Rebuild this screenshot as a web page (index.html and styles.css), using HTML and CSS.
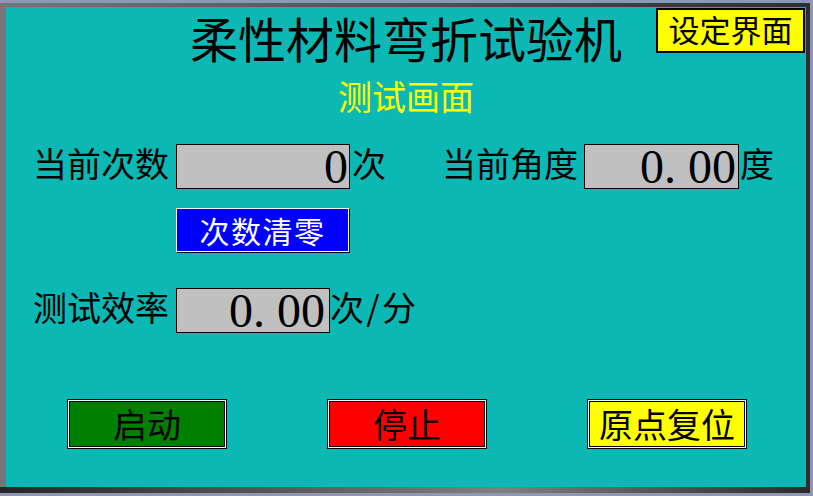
FILE: index.html
```html
<!DOCTYPE html>
<html lang="zh-CN">
<head>
<meta charset="utf-8">
<title>柔性材料弯折试验机</title>
<link rel="stylesheet" href="styles.css">
</head>
<body>
<div class="screen">
  <div class="frame">
    <main class="panel">
      <header class="header">
        <div class="spacer"></div>
        <h1 class="title">柔性材料弯折试验机</h1>
        <button class="btn-setup">设定界面</button>
      </header>
      <h2 class="subtitle">测试画面</h2>

      <div class="row row-1">
        <span class="label">当前次数</span>
        <div class="value value-count">0</div>
        <span class="unit unit-count">次</span>
        <span class="label label-angle">当前角度</span>
        <div class="value value-angle">0<span class="dot">.</span>00</div>
        <span class="unit unit-angle">度</span>
      </div>

      <div class="row row-2">
        <button class="btn-reset">次数清零</button>
      </div>

      <div class="row row-3">
        <span class="label">测试效率</span>
        <div class="value value-rate">0<span class="dot">.</span>00</div>
        <span class="unit unit-rate">次<span class="slash">/</span>分</span>
      </div>

      <div class="actions">
        <button class="btn-action btn-start">启动</button>
        <button class="btn-action btn-stop">停止</button>
        <button class="btn-action btn-home">原点复位</button>
      </div>
    </main>
  </div>
</div>
</body>
</html>
```

FILE: styles.css
```css
* {
  box-sizing: border-box;
}

html, body {
  margin: 0;
  padding: 0;
  background: #9096b8;
}

body {
  font-family: "Noto Sans CJK SC", "Noto Sans", sans-serif;
  color: #000;
}

.screen {
  width: 813px;
  height: 496px;
  padding: 3px 3px 3px 0;
  background: #9096b8;
}

.frame {
  width: 810px;
  height: 490px;
  padding: 4px 4px 6px 6px;
  background:
    linear-gradient(to right, #262626, #808080 62%, #2a2a2a) left bottom / 100% 6px no-repeat,
    linear-gradient(to right, #767676, #585858 40%, #2e2e2e);
}

.panel {
  width: 800px;
  height: 480px;
  background: #0bb8b4;
  display: flex;
  flex-direction: column;
}

/* header */
.header {
  display: grid;
  grid-template-columns: 1fr auto 1fr;
  height: 54px;
}

.title {
  margin: 6px 0 0;
  font-size: 48px;
  line-height: 48px;
  font-weight: normal;
  white-space: nowrap;
}

.btn-setup {
  justify-self: end;
  align-self: start;
  margin: 1px 1px 0 0;
  width: 149px;
  height: 45px;
  padding: 0 0 4px;
  border: 2px solid #000;
  background: #ffff00;
  font-family: inherit;
  font-size: 31px;
  line-height: 37px;
  color: #000;
  text-align: center;
}

.subtitle {
  margin: 18px 0 0;
  font-size: 34px;
  line-height: 34px;
  font-weight: normal;
  color: #ffff00;
  text-align: center;
}

/* rows */
.row {
  display: flex;
  align-items: flex-start;
  padding-left: 27px;
}

.row-1 {
  margin-top: 31px;
}

.row-2 {
  margin-top: 19px;
  padding-left: 170px;
}

.row-3 {
  margin-top: 36px;
}

.label,
.unit {
  margin-top: 2px;
  font-size: 34px;
  line-height: 34px;
  white-space: nowrap;
}

.label-angle {
  margin-left: 56px;
}

.value {
  height: 45px;
  margin-left: 7px;
  padding: 1px 1px 0 0;
  border: 1px solid #000;
  background: #c0c0c0;
  font-family: "Liberation Serif", "Times New Roman", serif;
  font-size: 48px;
  line-height: 42px;
  text-align: right;
  white-space: nowrap;
}

.value-count {
  width: 174px;
}

.value-angle {
  width: 155px;
  margin-left: 6px;
  padding-right: 2px;
}

.value-rate {
  width: 154px;
  padding-right: 4px;
}

.dot {
  display: inline-block;
  width: 24px;
  text-align: left;
}

.unit-count {
  margin-left: 2px;
}

.unit-angle {
  margin-left: 1px;
}

.unit-rate {
  margin-left: 0;
}

.slash {
  display: inline-block;
  width: 18px;
  text-align: center;
}

/* buttons */
.btn-reset {
  width: 173px;
  height: 44px;
  padding: 0;
  border: 1px solid #fff;
  box-shadow: 1px 1px 0 #000;
  background: #0000ff;
  color: #fff;
  font-family: inherit;
  font-size: 30px;
  line-height: 42px;
  letter-spacing: 1.5px;
  text-align: center;
}

.actions {
  display: flex;
  gap: 100px;
  margin-top: 66px;
  padding-left: 61px;
}

.btn-action {
  width: 160px;
  height: 50px;
  padding: 0;
  border: 1px solid #000;
  box-shadow: inset 0 0 0 1px #fff, inset 0 0 0 2px #000;
  font-family: inherit;
  font-size: 34px;
  line-height: 48px;
  color: #000;
  text-align: center;
  white-space: nowrap;
}

.btn-start {
  background: #008000;
}

.btn-stop {
  background: #ff0000;
}

.btn-home {
  background: #ffff00;
}
```
